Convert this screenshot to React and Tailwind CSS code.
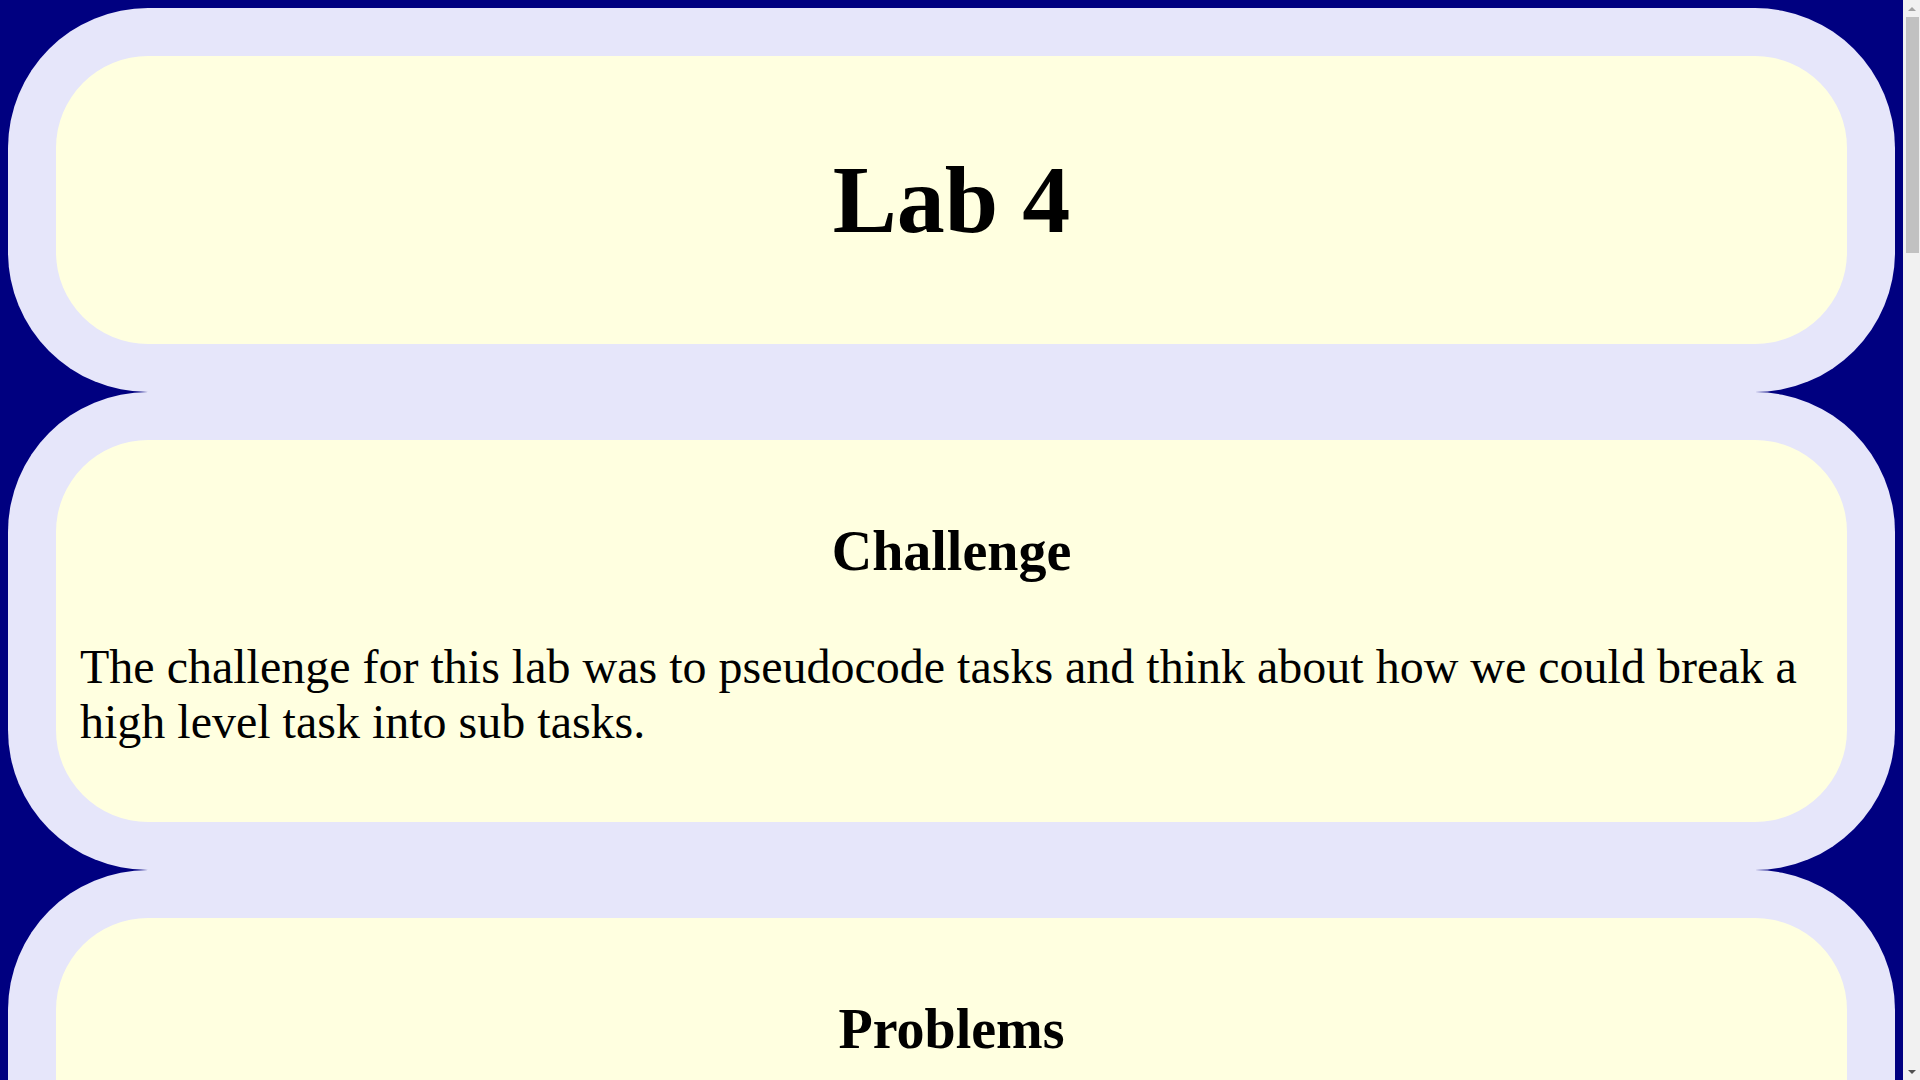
import React from "react";

const sections = [
  {
    title: "Challenge",
    paras: [
      "The challenge for this lab was to pseudocode tasks and think about how we could break a high level task into sub tasks.",
    ],
  },
  {
    title: "Problems",
    paras: [
      "The main problem I ran into was deciding how detailed each step of the pseudocode needed to be. At first my steps were too broad, and it was hard to tell what each one actually did.",
      "Another problem was keeping the order of the sub tasks straight, since some steps depended on the results of earlier ones.",
    ],
  },
  {
    title: "Pseudocode",
    paras: [
      "Task: Make a peanut butter and jelly sandwich.",
      "1. Get two slices of bread from the bag and place them on a plate.",
      "2. Open the jar of peanut butter and spread it on one slice.",
      "3. Open the jar of jelly and spread it on the other slice.",
      "4. Put the two slices together and cut the sandwich in half.",
    ],
  },
  {
    title: "Sub Tasks",
    paras: [
      "Breaking a high level task into sub tasks made it much easier to write the pseudocode. Each sub task could be written and checked on its own before putting everything together.",
      "Once the sub tasks were clear, turning them into steps that a computer could follow was much simpler.",
    ],
  },
  {
    title: "What I Learned",
    paras: [
      "I learned that planning a program before writing any code saves a lot of time. Pseudocode lets you focus on the logic of a problem without worrying about the syntax of a language.",
      "I also learned that a big task is less scary when it is split into small pieces.",
    ],
  },
  {
    title: "Conclusion",
    paras: [
      "Overall this lab showed me how useful pseudocode is, and I plan to use it to plan out my programs in the future.",
    ],
  },
];

function Box({ children }) {
  return (
    <div className="bg-[#e6e6fa] p-12 rounded-[140px]">
      <div className="bg-[#ffffe0] rounded-[92px] px-6 py-6 text-black">
        {children}
      </div>
    </div>
  );
}

function FakeScrollbar() {
  return (
    <div className="fixed top-0 right-0 h-screen w-[17px] bg-[#f1f1f1] flex flex-col items-center">
      <div className="h-[17px] w-full flex items-center justify-center">
        <div className="w-0 h-0 border-l-[4px] border-r-[4px] border-b-[4px] border-l-transparent border-r-transparent border-b-[#a3a3a3]" />
      </div>
      <div className="w-[13px] h-[236px] bg-[#c1c1c1] ml-[1px]" />
      <div className="flex-1" />
      <div className="h-[17px] w-full flex items-center justify-center">
        <div className="w-0 h-0 border-l-[4px] border-r-[4px] border-t-[4px] border-l-transparent border-r-transparent border-t-[#505050]" />
      </div>
    </div>
  );
}

export default function App() {
  return (
    <div
      className="min-h-screen bg-[#000080] pl-2 pr-[25px] pt-2 pb-2"
      style={{ fontFamily: '"Liberation Serif", "Times New Roman", serif' }}
    >
      <Box>
        <h1 className="text-center font-bold text-[96px] leading-[1.149] my-[64.8px]">
          Lab 4
        </h1>
      </Box>
      {sections.map((s) => (
        <Box key={s.title}>
          <h2 className="text-center font-bold text-[56px] leading-[1.149] my-[55.5px]">
            {s.title}
          </h2>
          {s.paras.map((p, i) => (
            <p key={i} className="text-[48px] leading-[1.149] my-12">
              {p}
            </p>
          ))}
        </Box>
      ))}
      <FakeScrollbar />
    </div>
  );
}
